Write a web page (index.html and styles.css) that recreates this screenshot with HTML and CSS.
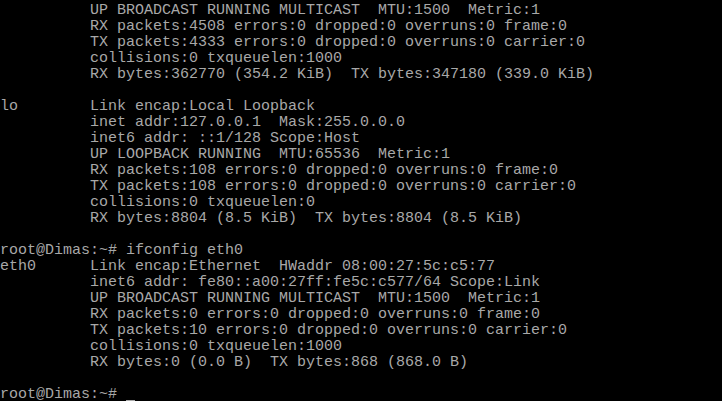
FILE: index.html
```html
<!DOCTYPE html>
<html>
<head>
<meta charset="utf-8">
<link rel="stylesheet" href="styles.css">
</head>
<body>
<pre class="term">          UP BROADCAST RUNNING MULTICAST  MTU:1500  Metric:1
          RX packets:4508 errors:0 dropped:0 overruns:0 frame:0
          TX packets:4333 errors:0 dropped:0 overruns:0 carrier:0
          collisions:0 txqueuelen:1000
          RX bytes:362770 (354.2 KiB)  TX bytes:347180 (339.0 KiB)

lo        Link encap:Local Loopback
          inet addr:127.0.0.1  Mask:255.0.0.0
          inet6 addr: ::1/128 Scope:Host
          UP LOOPBACK RUNNING  MTU:65536  Metric:1
          RX packets:108 errors:0 dropped:0 overruns:0 frame:0
          TX packets:108 errors:0 dropped:0 overruns:0 carrier:0
          collisions:0 txqueuelen:0
          RX bytes:8804 (8.5 KiB)  TX bytes:8804 (8.5 KiB)

root@Dimas:~# ifconfig eth0
eth0      Link encap:Ethernet  HWaddr 08:00:27:5c:c5:77
          inet6 addr: fe80::a00:27ff:fe5c:c577/64 Scope:Link
          UP BROADCAST RUNNING MULTICAST  MTU:1500  Metric:1
          RX packets:0 errors:0 dropped:0 overruns:0 frame:0
          TX packets:10 errors:0 dropped:0 overruns:0 carrier:0
          collisions:0 txqueuelen:1000
          RX bytes:0 (0.0 B)  TX bytes:868 (868.0 B)

root@Dimas:~# <span class="cursor"> </span></pre>
</body>
</html>
```
FILE: styles.css
```css
html, body {
  margin: 0;
  padding: 0;
  background: #000;
  height: 100%;
  overflow: hidden;
}
.term {
  margin: 0;
  padding: 3px 0 0 0;
  font-family: "Liberation Mono", monospace;
  font-size: 15px;
  line-height: 16px;
  color: #a8a8a8;
  white-space: pre;
}
.cursor {
  display: inline-block;
  width: 9px;
  height: 16px;
  vertical-align: top;
  box-sizing: border-box;
  border-bottom: 2px solid #a8a8a8;
  margin-top: -1px;
}
```
